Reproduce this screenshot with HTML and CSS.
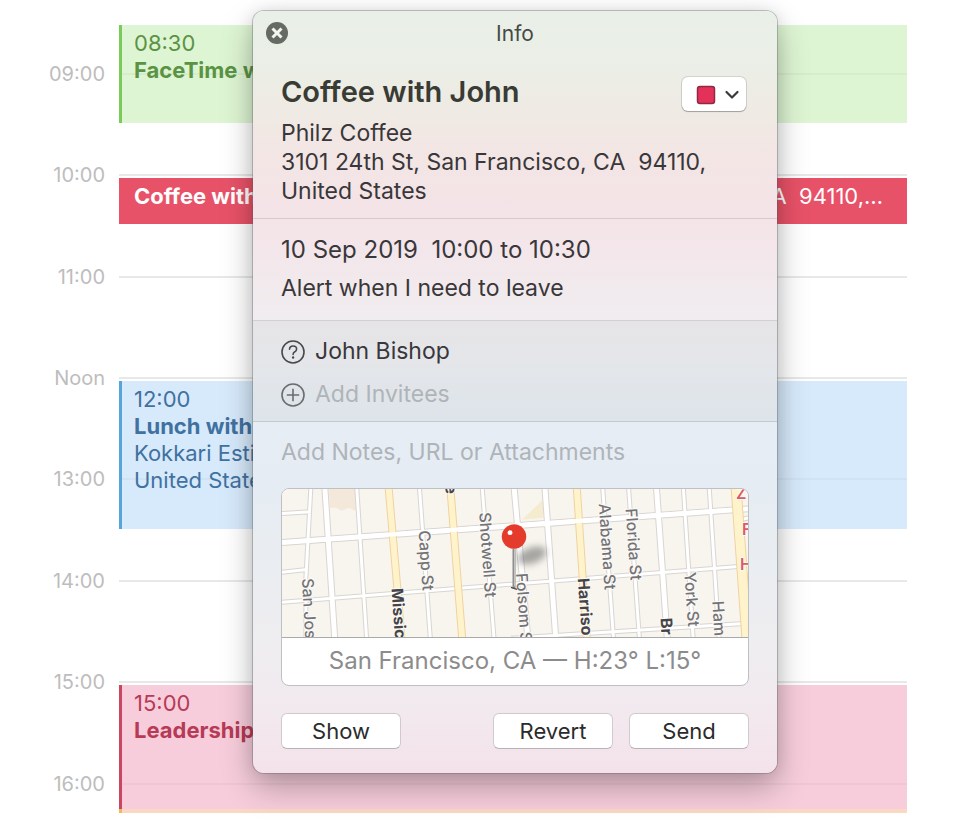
FILE: index.html
```html
<!DOCTYPE html>
<html lang="en">
<head>
<meta charset="utf-8">
<title>Calendar</title>
<link rel="stylesheet" href="styles.css">
</head>
<body>
<main class="calendar">
  <div class="hour h09"><span class="hour-label">09:00</span></div>
  <div class="hour h10"><span class="hour-label">10:00</span></div>
  <div class="hour h11"><span class="hour-label">11:00</span></div>
  <div class="hour h12"><span class="hour-label">Noon</span></div>
  <div class="hour h13"><span class="hour-label">13:00</span></div>
  <div class="hour h14"><span class="hour-label">14:00</span></div>
  <div class="hour h15"><span class="hour-label">15:00</span></div>
  <div class="hour h16"><span class="hour-label">16:00</span></div>

  <article class="event green">
    <p>08:30</p>
    <p class="event-title">FaceTime w</p>
  </article>
  <article class="event red">
    <p class="event-title">Coffee with</p>
    <p class="event-place">CA&nbsp; 94110,…</p>
  </article>
  <article class="event blue">
    <p>12:00</p>
    <p class="event-title">Lunch with</p>
    <p>Kokkari Esti</p>
    <p>United States</p>
  </article>
  <article class="event pink">
    <p>15:00</p>
    <p class="event-title">Leadership</p>
  </article>
  <div class="event amber"></div>
</main>

<section class="popover" aria-labelledby="popover-title">
  <header class="titlebar">
    <button class="close" type="button" aria-label="Close">
      <svg viewBox="0 0 22 22" width="22" height="22"><circle cx="11" cy="11" r="11" fill="#656a63"/><path d="M6.500 6.500l9 9M15.500 6.500l-9 9" stroke="#f2f5f0" stroke-width="3"/></svg>
    </button>
    <span id="popover-title">Info</span>
  </header>

  <div class="section summary">
    <div class="summary-text">
      <h1>Coffee with John</h1>
      <p>Philz Coffee</p>
      <p>3101 24th St, San Francisco, CA&nbsp; 94110, United States</p>
    </div>
    <div class="color-picker">
      <svg viewBox="0 0 64 34" width="64" height="34" aria-hidden="true"><rect x="15.500" y="9.500" width="17" height="17" rx="2.500" fill="#e4315a" stroke="#8e2a45" stroke-width="1.500"/><path d="M44.500 15l5.500 5.500 5.500-5.500" fill="none" stroke="#3a3a3a" stroke-width="2.200" stroke-linecap="round" stroke-linejoin="round"/></svg>
      <select aria-label="Calendar color"><option></option></select>
    </div>
  </div>

  <div class="section when">
    <p class="date">10 Sep 2019&nbsp; 10:00 to 10:30</p>
    <p>Alert when I need to leave</p>
  </div>

  <div class="section invitees">
    <div class="invitee">
      <svg viewBox="0 0 24 24" width="24" height="24" fill="none" stroke="#48494b" aria-hidden="true"><circle cx="12" cy="12" r="11" stroke-width="1.600"/><path d="M8.500 9.300c.1-2 1.500-3.300 3.600-3.300s3.500 1.200 3.500 3c0 1.400-.7 2.100-1.800 2.800-1.200.7-1.700 1.300-1.700 2.400v.3" stroke-width="1.600" stroke-linecap="round"/><circle cx="12.100" cy="17.500" r="1.200" fill="#48494b" stroke="none"/></svg>
      <span>John Bishop</span>
    </div>
    <label class="invitee">
      <svg viewBox="0 0 24 24" width="24" height="24" fill="none" stroke="#6a6d70" aria-hidden="true"><circle cx="12" cy="12" r="11" stroke-width="1.600"/><path d="M12 5.800v12.400M5.800 12h12.400" stroke-width="1.600"/></svg>
      <input type="text" placeholder="Add Invitees" aria-label="Add Invitees">
    </label>
  </div>

  <div class="details">
    <input type="text" placeholder="Add Notes, URL or Attachments" aria-label="Add Notes, URL or Attachments">
    <figure class="map">
      <svg class="map-image" viewBox="0 0 468 149" preserveAspectRatio="xMidYMid slice" aria-hidden="true">
        <defs>
          <filter id="soft" x="-50%" y="-50%" width="200%" height="200%"><feGaussianBlur stdDeviation="4"/></filter>
          <g id="thin">
            <path d="M-2 25L29 23M-2 84L25 81M-2 114L470 77M230 150L470 135M29-2L24 90V151M75-2L85 151M138-2L149 151M201-2L213 151M322-2L333 151M348-2L359 151M403-2L413 151M429-2L439 151M460 31L470 29"/>
          </g>
          <g id="medium"><path d="M43-2L53 151M233-2L247 151M264-2L275 151M376-2L387 151M-2 54L470 20"/></g>
          <g id="avenues"><path d="M107-2L116 102L120 151M169-2L181 151M296-2L306 151"/></g>
          <g id="boulevard"><path d="M456-2L467 151"/></g>
        </defs>
        <rect width="468" height="149" fill="#f8f5ee"/>
        <path d="M47 0H74V22L67 19 60 22 54 19H48Z" fill="#f4e8db"/>
        <path d="M241 31L262 11V29Z" fill="#f5ebcf"/>
        <g fill="none">
          <g stroke="#d8d5d2"><use href="#thin" stroke-width="5"/><use href="#medium" stroke-width="7"/></g>
          <g stroke="#fff"><use href="#thin" stroke-width="3"/><use href="#medium" stroke-width="5"/></g>
          <g stroke="#f0d2a0"><use href="#avenues" stroke-width="8"/><use href="#boulevard" stroke-width="11"/></g>
          <g stroke="#fff3cb"><use href="#avenues" stroke-width="6"/><use href="#boulevard" stroke-width="9"/></g>
          <path d="M-2 54L452 21" stroke="#fff" stroke-width="4"/>
        </g>
        <g class="street">
          <text transform="translate(20 90) rotate(87)">San Jos</text>
          <text transform="translate(137 42) rotate(86)">Capp St</text>
          <text transform="translate(198 24) rotate(86)">Shotwell St</text>
          <text transform="translate(235 85) rotate(86)">Folsom S</text>
          <text transform="translate(318 15) rotate(86)">Alabama St</text>
          <text transform="translate(345 20) rotate(86)">Florida St</text>
          <text transform="translate(404 84) rotate(86)">York St</text>
          <text transform="translate(432 113) rotate(86)">Ham</text>
        </g>
        <g class="street major">
          <text transform="translate(110 100) rotate(86)">Missic</text>
          <text transform="translate(297 90) rotate(86)">Harriso</text>
          <text transform="translate(380 130) rotate(86)">Br</text>
          <text transform="translate(164 -4) rotate(86)">e</text>
        </g>
        <g class="street district">
          <text x="456" y="10">Z</text>
          <text x="462" y="46">F</text>
          <text x="460" y="82">H</text>
        </g>
        <ellipse cx="251" cy="67" rx="15" ry="8" fill="#555" opacity=".5" transform="rotate(-20 251 67)" filter="url(#soft)"/>
        <path d="M233 60V100" stroke="#8d8d8d" stroke-width="3"/>
        <path d="M233.500 60V98" stroke="#c5c5c5" stroke-width="1"/>
        <path d="M230 99L236 101" stroke="#4a4a4a" stroke-width="1.500"/>
        <circle cx="233" cy="48" r="12.300" fill="#e43b2c"/>
        <circle cx="229" cy="44" r="2.500" fill="#fff"/>
      </svg>
      <figcaption>San Francisco, CA — H:23° L:15°</figcaption>
    </figure>
    <div class="actions">
      <button class="button" type="button">Show</button>
      <span class="spacer"></span>
      <button class="button" type="button">Revert</button>
      <button class="button" type="button">Send</button>
    </div>
  </div>
</section>
</body>
</html>
```
FILE: styles.css
```css
* {
  box-sizing: border-box;
}

body {
  margin: 0;
  background: #fff;
  font-family: Inter, "Liberation Sans", sans-serif;
  font-size: 22px;
  line-height: 29px;
  color: #39373a;
}

p,
h1,
figure {
  margin: 0;
}

button,
input,
select {
  font: inherit;
  color: inherit;
}

/* One grid row per half hour, starting at 08:30 */
.calendar {
  display: grid;
  grid-template-columns: 105px 1fr;
  grid-template-rows: repeat(4, 51px 51px 50px) 51px 51px 51px 29px;
  column-gap: 14px;
  padding: 23px 58px 13px 0;
}

.hour {
  grid-column: 1 / 3;
  display: grid;
  grid-template-columns: subgrid;
  align-self: start;
  align-items: center;
  height: 30px;
  margin-top: -15px;
  font-size: 20px;
  color: #bdbdbd;
}

.hour::after {
  content: "";
  height: 2px;
  background: #e8e8e8;
}

.hour-label {
  text-align: right;
}

.h09 { grid-row: 2; }
.h10 { grid-row: 4; }
.h11 { grid-row: 6; }
.h12 { grid-row: 8; }
.h13 { grid-row: 10; }
.h14 { grid-row: 12; }
.h15 { grid-row: 14; }
.h16 { grid-row: 16; }

.event {
  grid-column: 2;
  margin-top: 3px;
  padding: 5px 24px 0 12px;
  border-left: 3px solid;
  line-height: 27px;
  overflow: hidden;
  white-space: nowrap;
}

.event-title {
  font-weight: 700;
}

.green {
  grid-row: 1 / 3;
  margin: 2px 0;
  background: rgba(204, 239, 188, 0.65);
  border-color: #7acb57;
  color: #5b9345;
}

.red {
  grid-row: 4;
  display: flex;
  justify-content: space-between;
  margin-bottom: 2px;
  background: #e85268;
  border-color: #e85268;
  color: #fff;
}

.blue {
  grid-row: 8 / 11;
  margin-bottom: 1px;
  background: rgba(198, 225, 249, 0.7);
  border-color: #56a5da;
  color: #4171a0;
}

.pink {
  grid-row: 14 / 17;
  margin-bottom: 4px;
  background: rgba(243, 184, 204, 0.7);
  border-color: #ca4560;
  color: #b73a56;
}

.amber {
  grid-row: 16;
  align-self: end;
  height: 4px;
  margin: 0;
  padding: 0;
  background: #fad8c4;
  border-color: #f0b95c;
}

.popover {
  position: absolute;
  top: 11px;
  left: 253px;
  right: 188px;
  min-width: 524px;
  border-radius: 11px;
  background: linear-gradient(#e9f0e7 0, #ebeee6 60px, #eeebe4 90px, #f2e7e4 130px, #f4e3e6 190px, #f4e5e9 225px, #f0edf0 310px, #eeeff2 350px, #e7edf4 410px, #e5ecf3 470px, #eaedf1 560px, #efedf0 640px, #f2e8ed 710px, #f4e2ea 762px);
  box-shadow: 0 0 0 1px rgba(90, 95, 105, 0.35), 0 14px 32px rgba(0, 0, 0, 0.28), 0 0 16px rgba(0, 0, 0, 0.1);
  font-size: 23px;
}

.titlebar {
  display: grid;
  grid-template-columns: 22px 1fr 22px;
  align-items: center;
  height: 44px;
  padding: 0 13px;
  font-size: 21px;
  text-align: center;
  color: #454a45;
}

.close {
  display: flex;
  padding: 0;
  border: 0;
  background: none;
}

.section {
  padding: 16px 28px;
  border-bottom: 1px solid rgba(120, 115, 135, 0.25);
}

.summary {
  display: flex;
  justify-content: space-between;
  padding-top: 19px;
  padding-bottom: 12px;
}

.summary-text {
  flex: 1;
}

h1 {
  margin-bottom: 9px;
  font-size: 29px;
  font-weight: 600;
  line-height: 36px;
  color: #393b35;
}

.color-picker {
  display: grid;
  width: 64px;
  height: 34px;
  margin: 3px 3px 0 -64px;
  border-radius: 6px;
  background: #fff;
  box-shadow: 0 0 0 1px rgba(60, 70, 70, 0.15), 0 1px 1px rgba(0, 0, 0, 0.25);
}

.color-picker > * {
  grid-area: 1 / 1;
}

.color-picker select {
  appearance: none;
  width: 100%;
  border: 0;
  border-radius: 6px;
  background: transparent;
}

.when {
  display: grid;
  gap: 10px;
  padding-bottom: 17px;
}

.date,
figcaption {
  font-size: 24px;
}

.invitees {
  display: grid;
  gap: 14px;
  padding-bottom: 12px;
  background: rgba(120, 130, 130, 0.08);
}

.invitee {
  display: flex;
  align-items: center;
  gap: 10px;
}

input {
  flex: 1;
  width: 100%;
  height: 29px;
  padding: 0;
  border: 0;
  background: none;
}

input::placeholder {
  color: #afb4b9;
  opacity: 1;
}

.details {
  display: grid;
  padding: 16px 28px 24px;
}

.map {
  margin-top: 21px;
  border: 1px solid #bfc0c3;
  border-radius: 8px;
  background: #fff;
  overflow: hidden;
}

.map-image {
  display: block;
  width: 100%;
  height: 149px;
  border-bottom: 1px solid #aaa;
}

.street {
  font-size: 16px;
  font-weight: 500;
  fill: #737377;
  stroke: #fbf9f5;
  stroke-width: 2px;
  paint-order: stroke;
}

.major {
  font-weight: 700;
  fill: #454549;
}

.district {
  font-weight: 600;
  fill: #dc5a62;
}

figcaption {
  padding: 8px 0 10px;
  text-align: center;
  color: #8c8c8c;
}

.actions {
  display: flex;
  gap: 16px;
  margin-top: 27px;
}

.spacer {
  flex: 1;
}

.button {
  width: 120px;
  height: 36px;
  padding: 0;
  border: 1px solid #d0c9ce;
  border-bottom-color: #b9b2b7;
  border-radius: 6px;
  background: #fff;
  font-size: 22px;
  color: #2b2b2b;
}
```
